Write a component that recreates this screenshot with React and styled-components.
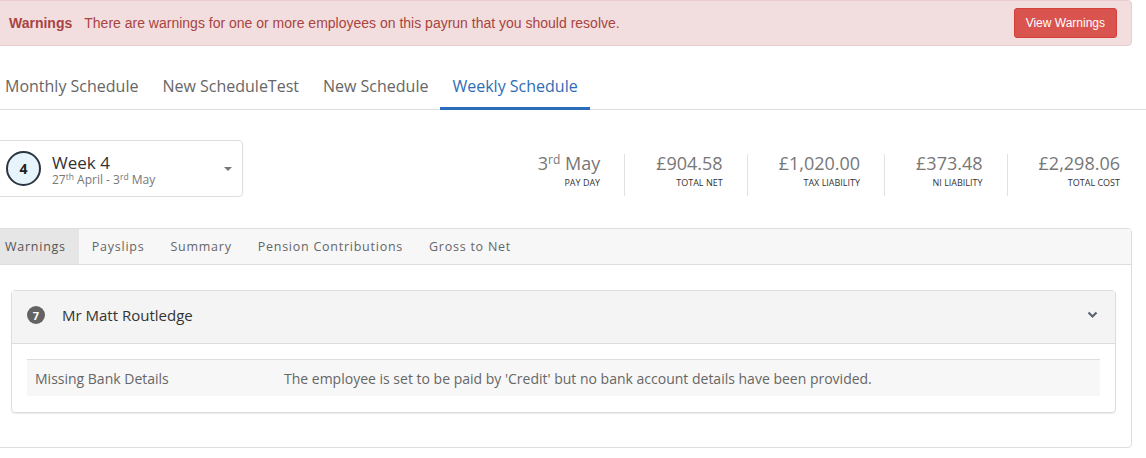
import React from 'react';
import styled, { createGlobalStyle } from 'styled-components';

const GlobalStyle = createGlobalStyle`
  html, body {
    margin: 0;
    padding: 0;
    background: #fff;
    font-family: "Open Sans", "Liberation Sans", sans-serif;
    color: #333;
  }
  * { box-sizing: border-box; }
`

const Page = styled.div`
  margin-left: -5px;
  width: 1137px;
  padding-bottom: 10px;
`

const Alert = styled.div`
  display: flex;
  align-items: center;
  height: 46px;
  padding: 0 14px 0 13px;
  background: #f2dede;
  border: 1px solid #ebccd1;
  border-radius: 4px;
  color: #a94442;
  font-family: "Liberation Sans", Arial, sans-serif;
  font-size: 14px;
`

const AlertTitle = styled.strong`
  margin-right: 12px;
`

const AlertText = styled.span`
  flex: 1;
`

const DangerButton = styled.button`
  height: 30px;
  padding: 0 11px;
  background: #d9534f;
  border: 1px solid #d43f3a;
  border-radius: 3px;
  color: #fff;
  font-family: "Liberation Sans", Arial, sans-serif;
  font-size: 12px;
`

const ScheduleNav = styled.div`
  display: flex;
  margin-top: 21px;
  border-bottom: 1px solid #ddd;
  width: 1151px;
`

const ScheduleTab = styled.div`
  padding: 8px 12px 10px;
  font-size: 16px;
  color: ${p => (p.active ? '#2e6db4' : '#666')};
  border-bottom: 3px solid ${p => (p.active ? '#2a6ebb' : 'transparent')};
  margin-bottom: -1px;
  &:first-child { padding-left: 10px; }
`

const RunBar = styled.div`
  display: flex;
  align-items: center;
  justify-content: space-between;
  margin-top: 30px;
`

const WeekCard = styled.div`
  display: flex;
  align-items: center;
  width: 248px;
  height: 57px;
  padding: 0 10px;
  border: 1px solid #ddd;
  border-radius: 4px;
`

const WeekNumber = styled.div`
  display: flex;
  align-items: center;
  justify-content: center;
  width: 35px;
  height: 35px;
  border-radius: 50%;
  border: 2px solid #2b3541;
  background: #e8f4fc;
  font-weight: 700;
  font-size: 14px;
  color: #222;
`

const WeekInfo = styled.div`
  flex: 1;
  margin-left: 11px;
  padding-top: 3px;
  display: flex;
  flex-direction: column;
`

const WeekTitle = styled.div`
  font-size: 17px;
  line-height: 19px;
  color: #333;
`

const WeekDates = styled.div`
  font-size: 12px;
  line-height: 16px;
  color: #777;
  sup { font-size: 8.5px; vertical-align: 4px; line-height: 0; }
`

const Caret = styled.div`
  width: 0;
  height: 0;
  border-left: 4px solid transparent;
  border-right: 4px solid transparent;
  border-top: 4px solid #777;
`

const Stats = styled.div`
  display: flex;
  align-items: stretch;
  padding-right: 12px;
  margin-top: 12px;
`

const Stat = styled.div`
  display: flex;
  flex-direction: column;
  align-items: flex-end;
  padding: 0 24px 0 31px;
  border-left: 1px solid ${p => (p.first ? 'transparent' : '#e2e2e2')};
  height: 42px;
  &:last-child { padding-right: 0; }
`

const StatValue = styled.div`
  font-size: 18px;
  line-height: 22px;
  color: #777;
  margin-top: -2px;
  sup { font-size: 12px; vertical-align: 6px; line-height: 0; }
`

const StatLabel = styled.div`
  font-size: 9px;
  line-height: 12px;
  text-transform: uppercase;
  color: #333;
  margin-top: 3px;
`

const Panel = styled.div`
  margin-top: 31px;
  border: 1px solid #ddd;
  border-radius: 4px;
`

const PanelTabs = styled.div`
  display: flex;
  height: 36px;
  background: #f7f7f7;
  border-bottom: 1px solid #ddd;
`

const PanelTab = styled.div`
  display: flex;
  align-items: center;
  padding: 0 13px;
  font-size: 12.5px;
  letter-spacing: 0.75px;
  color: ${p => (p.active ? '#555' : '#666')};
  background: ${p => (p.active ? '#e6e6e6' : 'transparent')};
  &:first-child { padding-left: 9px; }
`

const PanelBody = styled.div`
  padding: 25px 15px 34px;
`

const Employee = styled.div`
  border: 1px solid #ddd;
  border-radius: 4px;
  box-shadow: 0 1px 1px rgba(0, 0, 0, 0.08);
`

const EmployeeHeader = styled.div`
  display: flex;
  align-items: center;
  height: 53px;
  padding: 0 17px 4px 15px;
  background: #f4f4f4;
  border-bottom: 1px solid #ddd;
`

const CountBadge = styled.div`
  display: flex;
  align-items: center;
  justify-content: center;
  width: 18px;
  height: 18px;
  border-radius: 50%;
  background: #636363;
  color: #fff;
  font-size: 11px;
  font-weight: 700;
`

const EmployeeName = styled.div`
  flex: 1;
  margin-left: 17px;
  font-size: 15px;
  color: #333;
`

const EmployeeBody = styled.div`
  padding: 15px 15px 16px;
`

const WarningRow = styled.div`
  display: flex;
  align-items: center;
  height: 37px;
  border-top: 1px solid #ddd;
  background: #f7f7f7;
  font-size: 14px;
  color: #666;
`

const WarningType = styled.div`
  width: 257px;
  padding-left: 8px;
`

const WarningText = styled.div`
  flex: 1;
`

const Chevron = () => (
  <svg width="11" height="8" viewBox="0 0 11 8">
    <path d="M1.5 1.5 L5.5 5.5 L9.5 1.5" fill="none" stroke="#5b6470" strokeWidth="2.2" />
  </svg>
)

const scheduleTabs = ['Monthly Schedule', 'New ScheduleTest', 'New Schedule', 'Weekly Schedule']
const panelTabs = ['Warnings', 'Payslips', 'Summary', 'Pension Contributions', 'Gross to Net']
const stats = [
  { value: '£904.58', label: 'Total Net' },
  { value: '£1,020.00', label: 'Tax Liability' },
  { value: '£373.48', label: 'NI Liability' },
  { value: '£2,298.06', label: 'Total Cost' },
]

export default function App() {
  return (
    <Page>
      <GlobalStyle />
      <Alert>
        <AlertTitle>Warnings</AlertTitle>
        <AlertText>There are warnings for one or more employees on this payrun that you should resolve.</AlertText>
        <DangerButton>View Warnings</DangerButton>
      </Alert>

      <ScheduleNav>
        {scheduleTabs.map(t => (
          <ScheduleTab key={t} active={t === 'Weekly Schedule'}>{t}</ScheduleTab>
        ))}
      </ScheduleNav>

      <RunBar>
        <WeekCard>
          <WeekNumber>4</WeekNumber>
          <WeekInfo>
            <WeekTitle>Week 4</WeekTitle>
            <WeekDates>27<sup>th</sup> April - 3<sup>rd</sup> May</WeekDates>
          </WeekInfo>
          <Caret />
        </WeekCard>
        <Stats>
          <Stat first>
            <StatValue>3<sup>rd</sup> May</StatValue>
            <StatLabel>Pay Day</StatLabel>
          </Stat>
          {stats.map(s => (
            <Stat key={s.label}>
              <StatValue>{s.value}</StatValue>
              <StatLabel>{s.label}</StatLabel>
            </Stat>
          ))}
        </Stats>
      </RunBar>

      <Panel>
        <PanelTabs>
          {panelTabs.map(t => (
            <PanelTab key={t} active={t === 'Warnings'}>{t}</PanelTab>
          ))}
        </PanelTabs>
        <PanelBody>
          <Employee>
            <EmployeeHeader>
              <CountBadge>7</CountBadge>
              <EmployeeName>Mr Matt Routledge</EmployeeName>
              <Chevron />
            </EmployeeHeader>
            <EmployeeBody>
              <WarningRow>
                <WarningType>Missing Bank Details</WarningType>
                <WarningText>The employee is set to be paid by 'Credit' but no bank account details have been provided.</WarningText>
              </WarningRow>
            </EmployeeBody>
          </Employee>
        </PanelBody>
      </Panel>
    </Page>
  );
}
